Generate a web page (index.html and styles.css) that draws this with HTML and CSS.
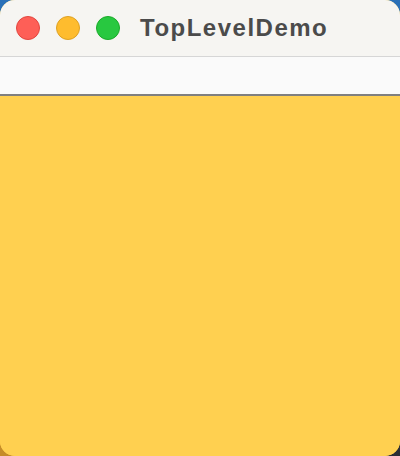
FILE: index.html
```html
<!DOCTYPE html>
<html>
<head>
<meta charset="utf-8">
<link rel="stylesheet" href="styles.css">
</head>
<body>
<div class="window">
  <div class="titlebar">
    <div class="lights">
      <span class="light red"></span>
      <span class="light yellow"></span>
      <span class="light green"></span>
    </div>
    <div class="title">TopLevelDemo</div>
  </div>
  <div class="toolbar"></div>
  <div class="content"></div>
</div>
</body>
</html>
```
FILE: styles.css
```css
html, body {
  margin: 0;
  padding: 0;
}
body {
  width: 400px;
  height: 456px;
  overflow: hidden;
  background:
    linear-gradient(to right, #c68c28 50%, #2b2e35 50%) bottom / 100% 50% no-repeat,
    #2a70b8;
}
.window {
  width: 400px;
  height: 456px;
  border-radius: 15px;
  overflow: hidden;
  display: flex;
  flex-direction: column;
  background: #ffd050;
}
.titlebar {
  flex: none;
  height: 57px;
  box-sizing: border-box;
  background: #f6f5f2;
  border-bottom: 1px solid #d6d6d6;
  display: flex;
  align-items: center;
}
.lights {
  display: flex;
  gap: 16px;
  padding-left: 16px;
}
.light {
  width: 24px;
  height: 24px;
  border-radius: 50%;
  box-sizing: border-box;
}
.red { background: #fe5f57; border: 1px solid #e2463f; }
.yellow { background: #febc2e; border: 1px solid #dea123; }
.green { background: #28c840; border: 1px solid #1aab29; }
.title {
  margin-left: 20px;
  font-family: "Liberation Sans", Arial, sans-serif;
  font-weight: bold;
  font-size: 24px;
  letter-spacing: 1.5px;
  color: #4b4b4b;
  margin-top: -1px;
}
.toolbar {
  flex: none;
  height: 37px;
  background: #fafafa;
  border-bottom: 2px solid #7f7f7f;
}
.content {
  flex: 1;
  background: #ffd050;
}
```
